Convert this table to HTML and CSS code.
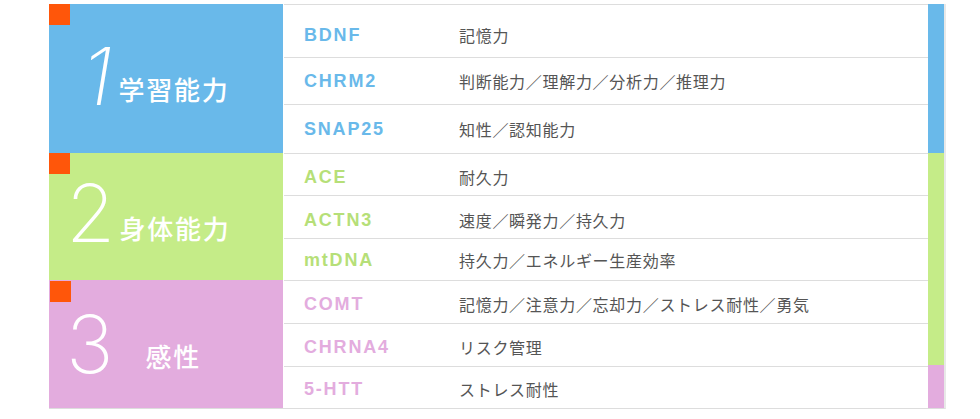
FILE: index.html
```html
<!DOCTYPE html>
<html lang="ja">
<head>
<meta charset="utf-8">
<title>遺伝子と能力</title>
<link rel="stylesheet" href="styles.css">
</head>
<body>
<div class="chart">
  <div class="sections">
    <section class="sec sec-1">
      <div class="label label-1">
        <span class="mark"></span>
        <span class="num num-1">1</span>
        <span class="name">学習能力</span>
      </div>
      <div class="rows">
        <div class="row"><span class="gene">BDNF</span><span class="desc">記憶力</span></div>
        <div class="row"><span class="gene">CHRM2</span><span class="desc">判断能力／理解力／分析力／推理力</span></div>
        <div class="row"><span class="gene">SNAP25</span><span class="desc">知性／認知能力</span></div>
      </div>
    </section>
    <section class="sec sec-2">
      <div class="label label-2">
        <span class="mark"></span>
        <span class="num">2</span>
        <span class="name">身体能力</span>
      </div>
      <div class="rows">
        <div class="row"><span class="gene">ACE</span><span class="desc">耐久力</span></div>
        <div class="row"><span class="gene">ACTN3</span><span class="desc">速度／瞬発力／持久力</span></div>
        <div class="row"><span class="gene">mtDNA</span><span class="desc">持久力／エネルギー生産効率</span></div>
      </div>
    </section>
    <section class="sec sec-3">
      <div class="label label-3">
        <span class="mark"></span>
        <span class="num">3</span>
        <span class="name">感性</span>
      </div>
      <div class="rows">
        <div class="row"><span class="gene">COMT</span><span class="desc">記憶力／注意力／忘却力／ストレス耐性／勇気</span></div>
        <div class="row"><span class="gene">CHRNA4</span><span class="desc">リスク管理</span></div>
        <div class="row"><span class="gene">5-HTT</span><span class="desc">ストレス耐性</span></div>
      </div>
    </section>
  </div>
  <div class="bar">
    <span class="bar-seg bar-blue"></span>
    <span class="bar-seg bar-green"></span>
    <span class="bar-seg bar-pink"></span>
  </div>
</div>
</body>
</html>
```

FILE: styles.css
```css
body {
  margin: 0;
  background: #ffffff;
}

.chart {
  display: flex;
  margin: 4px 0 0 49px;
  width: 897px;
  box-sizing: border-box;
  border-bottom: 1px solid #dddddd;
  border-right: 2px solid #e8e8e8;
}

.sections {
  width: 879px;
  display: flex;
  flex-direction: column;
}

.sec {
  display: flex;
}

.sec-1 { height: 149px; }
.sec-2 { height: 127px; }
.sec-3 { height: 128px; }

.label {
  position: relative;
  width: 234px;
  flex: none;
  display: flex;
  align-items: center;
  box-sizing: border-box;
  color: #ffffff;
}

.sec-1 .label { background: #69b9ea; }
.sec-2 .label { background: #c5ec88; }
.sec-3 .label { background: #e3acde; }

.mark {
  position: absolute;
  left: 0;
  top: 0;
  width: 21px;
  height: 21px;
  background: #ff560a;
}

.label-3 .mark {
  left: 1px;
  top: 1px;
}

.num {
  font-family: "Inter", "Roboto", sans-serif;
  font-weight: 250;
  font-size: 80px;
  line-height: 1;
}

.num-1 {
  font-style: italic;
}

.name {
  font-family: "Noto Sans CJK JP", sans-serif;
  font-weight: 500;
  font-size: 26px;
  line-height: 1;
  letter-spacing: 1.8px;
}

.label-1 { padding: 0 0 6px 33px; }
.label-1 .name { margin: 26px 0 0 6px; }

.label-2 { padding: 0 0 8px 17px; }
.label-2 .name { margin: 30px 0 0 4px; }

.label-3 { padding: 0 0 0 17px; }
.label-3 .name { margin: 24px 0 0 32px; }

.rows {
  flex: 1;
  margin-left: 1px;
  display: flex;
  flex-direction: column;
}

.row {
  display: flex;
  align-items: center;
  box-sizing: border-box;
  border-top: 1px solid #dddddd;
  padding-top: 3px;
}

.sec-1 .row:nth-child(1) { height: 53px; padding-top: 7px; }
.sec-1 .row:nth-child(2) { height: 47px; padding-top: 0; }
.sec-1 .row:nth-child(3) { height: 49px; padding-top: 0; }

.sec-2 .row:nth-child(1) { height: 42px; padding-top: 4px; }
.sec-2 .row:nth-child(2) { height: 43px; padding-top: 5px; }
.sec-2 .row:nth-child(3) { height: 42px; padding-top: 1px; }

.sec-3 .row:nth-child(1) { height: 43px; }
.sec-3 .row:nth-child(2) { height: 43px; }
.sec-3 .row:nth-child(3) { height: 42px; }

.gene {
  width: 175px;
  flex: none;
  padding-left: 20px;
  box-sizing: border-box;
  font-family: "Liberation Sans", Arial, sans-serif;
  font-weight: bold;
  font-size: 18px;
  line-height: 20px;
  letter-spacing: 1.8px;
}

.sec-1 .gene { color: #69b9ea; }
.sec-2 .gene { color: #b6df78; }
.sec-3 .gene { color: #e3acde; }

.desc {
  font-family: "Noto Sans CJK JP", sans-serif;
  font-size: 16px;
  line-height: 20px;
  letter-spacing: 0.7px;
  color: #555555;
}

.bar {
  width: 16px;
  flex: none;
  display: flex;
  flex-direction: column;
}

.bar-seg {
  display: block;
}

.bar-blue { height: 149px; background: #69b9ea; }
.bar-green { height: 212px; background: #c5ec88; }
.bar-pink { flex: 1; background: #e3acde; }
```
